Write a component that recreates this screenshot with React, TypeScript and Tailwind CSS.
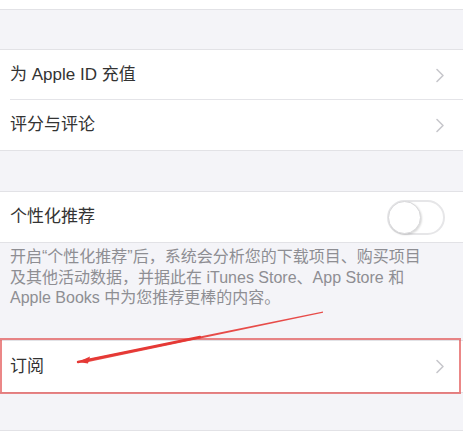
import React from "react";

const font = { fontFamily: '"Liberation Sans", "Noto Sans CJK SC", sans-serif' };

function Chevron() {
  return (
    <svg width="10" height="15" viewBox="0 0 10 15" className="shrink-0">
      <polyline points="2,1.5 8,7.5 2,13.5" fill="none" stroke="#c7c7cc" strokeWidth="1.6" strokeLinecap="round" strokeLinejoin="round" />
    </svg>
  );
}

function Row({ label, divider = false, h = "h-[50px]" }: { label: string; divider?: boolean; h?: string }) {
  return (
    <div className={`relative flex ${h} items-center justify-between bg-white pl-[10px] pr-[18px]`}>
      <span className="text-[17px] text-[#333333]">{label}</span>
      <Chevron />
      {divider && <div className="absolute bottom-0 left-[10px] right-0 h-px bg-[#e4e4e8]" />}
    </div>
  );
}

export default function App() {
  return (
    <div className="relative h-[444px] w-[463px] overflow-hidden bg-[#f4f4f8]" style={font}>
      <div className="h-[10px] border-b border-[#e2e2e6] bg-white" />
      <div className="h-[40px] border-b border-[#e2e2e6]" />
      <div className="border-b border-[#e2e2e6]">
        <Row label="为 Apple ID 充值" divider />
        <Row label="评分与评论" />
      </div>
      <div className="h-[41px] border-b border-[#e2e2e6]" />
      <div className="flex h-[51px] items-center justify-between border-b border-[#e2e2e6] bg-white pl-[10px] pr-[18px]">
        <span className="text-[17px] text-[#333333]">个性化推荐</span>
        <div className="relative h-[35px] w-[58px] rounded-full border-2 border-[#e6e6e8] bg-white">
          <div className="absolute left-[-1px] top-[-1px] h-[33px] w-[33px] rounded-full border border-[#d8d8da] bg-white shadow-[1px_1px_2px_rgba(0,0,0,0.15)]" />
        </div>
      </div>
      <div className="h-[97px] pl-[10px] pt-[4px] text-[16px] leading-[20.5px] text-[#8e8e93]">
        <div>开启“个性化推荐”后，系统会分析您的下载项目、购买项目</div>
        <div>及其他活动数据，并据此在 iTunes Store、App Store 和</div>
        <div>Apple Books 中为您推荐更棒的内容。</div>
      </div>
      <div className="border-b border-t border-[#e2e2e6]">
        <Row label="订阅" h="h-[51px]" />
      </div>
      <div className="h-[38px] border-b border-[#e2e2e6]" />
      <div className="h-[20px] bg-white" />

      {/* annotation box */}
      <div className="pointer-events-none absolute left-0 top-[338px] h-[56px] w-[461px] border-2 border-[rgba(225,70,70,0.65)]" />
      {/* annotation arrow */}
      <svg className="pointer-events-none absolute left-0 top-0" width="463" height="444" viewBox="0 0 463 444">
        <polygon points="323,311.5 323,312.8 86,362.6 85.4,359.8" fill="#e53935" opacity="0.9" />
        <polygon points="78,362 90,356.5 88,363.5" fill="#e53935" />
        <line x1="78" y1="362" x2="200" y2="337" stroke="#e53935" strokeWidth="2.4" strokeLinecap="round" />
      </svg>
    </div>
  );
}
